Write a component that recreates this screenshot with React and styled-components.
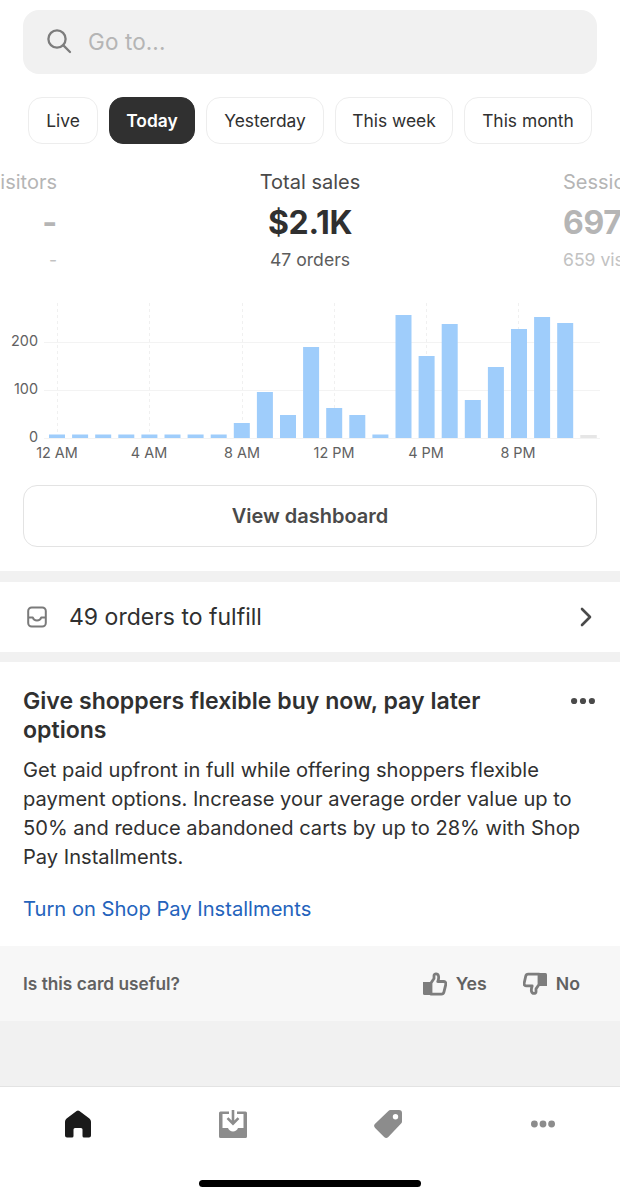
import React from "react";
import styled, { createGlobalStyle } from "styled-components";

const Global = createGlobalStyle`
  html, body { margin: 0; padding: 0; background: #fff; }
  * { box-sizing: border-box; }
  body { font-family: Inter, "Liberation Sans", sans-serif; color: #303030; }
`;
const Page = styled.div`
  width: 620px; height: 1200px; overflow: hidden; display: flex; flex-direction: column; background: #f1f1f1;
`;
const Top = styled.section`
  background: #fff; padding-top: 10px; height: 571px; display: flex; flex-direction: column;
`;
const Search = styled.div`
  margin: 0 23px; height: 64px; border-radius: 16px; background: #f1f1f1;
  display: flex; align-items: center; gap: 16px; padding: 0 23px 2px;
`;
const Placeholder = styled.span`
  font-size: 22.5px; color: #b5b5b5; letter-spacing: 0.1px;
`;
const Chips = styled.div`
  display: flex; margin: 23px 0 0 28px; gap: 11px;
`;
const Chip = styled.button`
  height: 47px; width: ${p => p.$w}px; padding: 0; border-radius: 14px; font: inherit; font-size: 17.4px;
  font-weight: ${p => (p.$active ? 600 : 400)};
  display: flex; align-items: center; justify-content: center;
  background: ${p => (p.$active ? "#303030" : "#fff")};
  color: ${p => (p.$active ? "#fff" : "#303030")};
  border: 1px solid ${p => (p.$active ? "#303030" : "#ededed")};
`;
const Stats = styled.div`
  display: grid; grid-template-columns: 57px 1fr 57px; margin-top: 26px; height: 100px; width: 620px; overflow: hidden;
`;
const Stat = styled.div`
  display: flex; flex-direction: column; white-space: nowrap;
  align-items: ${p => p.$align};
  color: ${p => (p.$muted ? "#b5b5b5" : "#303030")};
`;
const StatLabel = styled.div`
  font-size: 20px; line-height: 24px; height: 24px;
  color: ${p => (p.$muted ? "#b5b5b5" : "#4a4a4a")};
`;
const StatValue = styled.div`
  font-size: 32px; font-weight: 700; line-height: 40px; margin-top: 9px; letter-spacing: -0.3px;
`;
const StatSub = styled.div`
  font-size: 17.6px; line-height: 22px; margin-top: 6px;
  color: ${p => (p.$muted ? "#c2c2c2" : "#5c5c5c")};
`;
const Chart = styled.svg`
  display: block; width: 620px; height: 172px; margin-top: 26px; flex: none;
`;
const AxisText = styled.text`
  font-family: Inter, "Liberation Sans", sans-serif; font-size: 14.4px; fill: #616161;
`;
const Dashboard = styled.button`
  margin: 17px 23px 0; height: 62px; flex: none; background: #fff; border: 1.5px solid #e3e3e3; border-radius: 14px;
  font: inherit; font-size: 20px; font-weight: 600; color: #4a4a4a;
`;
const FulfillRow = styled.div`
  margin-top: 11px; height: 70px; background: #fff; display: flex; align-items: center; padding: 0 28px 0 27px;
`;
const FulfillText = styled.span`
  flex: 1; margin-left: 22px; font-size: 23px; color: #303030;
`;
const Card = styled.article`
  margin-top: 10px; background: #fff; height: 284px; padding: 25px 25px 0 23px; display: flex; flex-direction: column;
`;
const CardHead = styled.div`
  display: flex; justify-content: space-between; align-items: flex-start;
`;
const CardTitle = styled.h2`
  margin: 0; font-size: 23.1px; line-height: 29px; font-weight: 600; color: #303030; width: 520px;
`;
const CardDots = styled.span`
  display: flex; margin-top: 10px;
`;
const CardBody = styled.p`
  margin: 11px 0 0; font-size: 20.1px; line-height: 29px; color: #303030; width: 572px;
`;
const CardLink = styled.a`
  margin-top: 22px; font-size: 20.15px; line-height: 29px; color: #2463bc;
`;
const Feedback = styled.div`
  height: 75px; background: #f7f7f7; display: flex; align-items: center; padding: 0 40px 0 23px;
`;
const Question = styled.span`
  flex: 1; font-size: 17.3px; font-weight: 600; color: #616161;
`;
const Vote = styled.span`
  display: flex; align-items: center; gap: 9px; font-size: 17.7px; font-weight: 600; color: #616161;
  margin-left: ${p => p.$gap}px;
`;
const Spacer = styled.div`
  height: 65px; background: #f1f1f1;
`;
const TabBar = styled.nav`
  flex: 1; background: #fff; border-top: 1px solid #e3e3e3; display: flex; flex-direction: column; align-items: center;
`;
const Tabs = styled.div`
  display: grid; grid-template-columns: repeat(4, 155px); grid-auto-rows: 74px; width: 620px; height: 93px;
  justify-items: center; align-items: center;
`;
const HomeIndicator = styled.div`
  width: 222px; height: 7px; border-radius: 4px; background: #000;
`;

const bars = [3.5,3.5,3.5,3.5,3.5,3.5,3.5,3.5,15,46,23,91,30,23,3.5,123,82,114,38,71,109,121,115];
const hours = [["12 AM",57],["4 AM",149],["8 AM",242],["12 PM",334],["4 PM",426],["8 PM",518]];

function SalesChart() {
  return (
    <Chart viewBox="0 296 620 172">
      <g stroke="#f3f3f3">
        <line x1="44" x2="600" y1="342.5" y2="342.5" />
        <line x1="44" x2="600" y1="390.5" y2="390.5" />
        <line x1="44" x2="600" y1="438.5" y2="438.5" />
      </g>
      {hours.map(([, x]) => (
        <line key={x} x1={x + 0.5} x2={x + 0.5} y1="303" y2="438" stroke="#f0f0f0" strokeDasharray="3 3" />
      ))}
      {bars.map((h, i) => (
        <rect key={i} x={49 + i * 23.1} y={438 - h} width="16" height={h} fill="#9fcdfb" />
      ))}
      <rect x={49 + 23 * 23.1} y="435" width="16.5" height="3" fill="#e6e6e6" />
      <AxisText x="38" y="346" textAnchor="end">200</AxisText>
      <AxisText x="38" y="394" textAnchor="end">100</AxisText>
      <AxisText x="38" y="442" textAnchor="end">0</AxisText>
      {hours.map(([t, x]) => (
        <AxisText key={t} x={x} y="458" textAnchor="middle">{t}</AxisText>
      ))}
    </Chart>
  );
}

const SearchIcon = () => (
  <svg width="26" height="26" viewBox="0 0 26 26" fill="none" stroke="#7d7d7d" strokeWidth="2.3" strokeLinecap="round">
    <circle cx="11" cy="11" r="8.6" />
    <path d="M17.4 17.4 24 24" />
  </svg>
);
const InboxIcon = () => (
  <svg width="20" height="22" viewBox="0 0 20 22" fill="none" stroke="#7a7a7a" strokeWidth="2" strokeLinejoin="round">
    <rect x="1.2" y="1.5" width="17.6" height="19" rx="3.5" />
    <path d="M1.2 11.5h4.6c.6 2 2.2 3 4.2 3s3.6-1 4.2-3h4.6" />
  </svg>
);
const Chevron = () => (
  <svg width="12" height="20" viewBox="0 0 12 20" fill="none" stroke="#4a4a4a" strokeWidth="2.6" strokeLinecap="round" strokeLinejoin="round">
    <path d="M2 2l8 8-8 8" />
  </svg>
);
const DotsIcon = ({ color, w = 24, r = 3.1 }) => (
  <svg width={w} height="8" viewBox={`0 0 ${w} 8`} fill={color}>
    <circle cx={r} cy="4" r={r} />
    <circle cx={w / 2} cy="4" r={r} />
    <circle cx={w - r} cy="4" r={r} />
  </svg>
);
const ThumbUp = () => (
  <svg width="24" height="24" viewBox="0 0 24 24">
    <path d="M0 10h8v13H1.500A1.500 1.500 0 0 1 0 21.500z" fill="#7d7d7d" />
    <path d="M8 11 11 6.500V3.500c0-2 3.800-2.300 4.500.5.400 1.700 0 3.700-.7 5.500h5.700c1.700 0 2.700 1.300 2.300 2.900l-1.900 7.800c-.3 1.300-1.300 2-2.500 2H8z" fill="none" stroke="#7d7d7d" strokeWidth="2.800" strokeLinejoin="round" />
  </svg>
);
const ThumbDown = () => (
  <svg width="24" height="24" viewBox="0 0 24 24">
    <path d="M16 1h6.500A1.500 1.500 0 0 1 24 2.500V14h-8z" fill="#7d7d7d" />
    <path d="M16 2.200H5.200c-1.200 0-2.200.7-2.500 2L1.200 11c-.4 1.600.6 2.900 2.300 2.900h5.700c-.7 1.800-1.100 3.800-.7 5.500.7 2.800 4.500 2.500 4.500.5v-3l3-4.400z" fill="none" stroke="#7d7d7d" strokeWidth="2.800" strokeLinejoin="round" />
  </svg>
);
const HomeIcon = () => (
  <svg width="26" height="28" viewBox="0 0 26 28" fill="#1a1a1a">
    <path d="M11.600 1 1.600 8.500A4 4 0 0 0 0 11.700V25.500A2 2 0 0 0 2 27.500h5a1.500 1.500 0 0 0 1.500-1.500v-6.500a1.500 1.500 0 0 1 1.500-1.500h6a1.500 1.500 0 0 1 1.500 1.500V26a1.500 1.500 0 0 0 1.500 1.500h5a2 2 0 0 0 2-2V11.700a4 4 0 0 0-1.600-3.200L14.400 1a2.300 2.300 0 0 0-2.800 0z" />
  </svg>
);
const InstallIcon = () => (
  <svg width="28" height="28" viewBox="0 0 28 28" fill="#8c8c8c">
    <path fillRule="evenodd" d="M1.500 1.500H10v2.500H3.500v14H9c.8 2.200 2.700 3.500 5 3.500s4.200-1.300 5-3.500h5.500V4H18V1.500h8.500A1.500 1.500 0 0 1 28 3v23.500a1.500 1.500 0 0 1-1.500 1.500h-25A1.500 1.500 0 0 1 0 26.500V3a1.500 1.500 0 0 1 1.500-1.500z" />
    <path d="M12.700 0h2.600v10.500l3.300-3.300 1.800 1.800-6.400 6.500L7.600 9l1.800-1.800 3.300 3.300z" />
  </svg>
);
const TagIcon = () => (
  <svg width="28" height="28" viewBox="0 0 28 28" fill="#8c8c8c">
    <path fillRule="evenodd" d="M16.500 0H25a3 3 0 0 1 3 3v8.500a3 3 0 0 1-.9 2.100L14.300 26.900a3 3 0 0 1-4.200 0L1.100 17.900a3 3 0 0 1 0-4.200L14.400.9A3 3 0 0 1 16.500 0zM21.500 4a2.700 2.700 0 1 0 0 5.400 2.700 2.700 0 0 0 0-5.400z" />
  </svg>
);

const chips = [["Live", 70], ["Today", 86, true], ["Yesterday", 118], ["This week", 118], ["This month", 128]];

export default function App() {
  return (
    <Page>
      <Global />
      <Top>
        <Search>
          <SearchIcon />
          <Placeholder>Go to...</Placeholder>
        </Search>
        <Chips>
          {chips.map(([t, w, active]) => (
            <Chip key={t} $w={w} $active={active}>{t}</Chip>
          ))}
        </Chips>
        <Stats>
          <Stat $align="flex-end" $muted>
            <StatLabel $muted>Visitors</StatLabel>
            <StatValue>-</StatValue>
            <StatSub $muted>-</StatSub>
          </Stat>
          <Stat $align="center">
            <StatLabel>Total sales</StatLabel>
            <StatValue>$2.1K</StatValue>
            <StatSub>47 orders</StatSub>
          </Stat>
          <Stat $align="flex-start" $muted>
            <StatLabel $muted>Sessions</StatLabel>
            <StatValue>697</StatValue>
            <StatSub $muted>659 visitors</StatSub>
          </Stat>
        </Stats>
        <SalesChart />
        <Dashboard>View dashboard</Dashboard>
      </Top>
      <FulfillRow>
        <InboxIcon />
        <FulfillText>49 orders to fulfill</FulfillText>
        <Chevron />
      </FulfillRow>
      <Card>
        <CardHead>
          <CardTitle>Give shoppers flexible buy now, pay later options</CardTitle>
          <CardDots><DotsIcon color="#4a4a4a" /></CardDots>
        </CardHead>
        <CardBody>
          Get paid upfront in full while offering shoppers flexible payment options. Increase your average order value up to 50% and reduce abandoned carts by up to 28% with Shop Pay Installments.
        </CardBody>
        <CardLink>Turn on Shop Pay Installments</CardLink>
      </Card>
      <Feedback>
        <Question>Is this card useful?</Question>
        <Vote><ThumbUp />Yes</Vote>
        <Vote $gap={36}><ThumbDown />No</Vote>
      </Feedback>
      <Spacer />
      <TabBar>
        <Tabs>
          <HomeIcon />
          <InstallIcon />
          <TagIcon />
          <DotsIcon color="#8c8c8c" w={24} r={3.4} />
        </Tabs>
        <HomeIndicator />
      </TabBar>
    </Page>
  );
}
